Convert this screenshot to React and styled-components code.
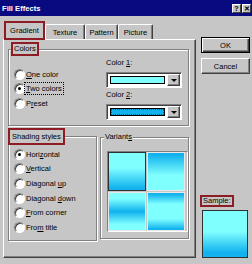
import styled, { createGlobalStyle, css } from "styled-components";

const BG = "#c6c6c6";
const MARK = "#8e1c24";
const C1 = "#80ffff";
const C2 = "#12b2ee";

const GlobalStyle = createGlobalStyle`
  html, body { margin: 0; padding: 0; background: ${BG}; }
  body {
    font-family: "Liberation Sans", Arial, sans-serif;
    font-size: 7.5px;
    color: #000;
  }
`;

const Window = styled.div`
  width: 252px;
  height: 264px;
  display: flex;
  flex-direction: column;
  background: ${BG};
  overflow: hidden;
`;

const TitleBar = styled.div`
  height: 16px;
  flex: none;
  display: flex;
  align-items: center;
  padding: 0 1px 0 2px;
  background: #0a0a80;
  color: #fff;
  font-weight: bold;
  font-size: 7.6px;
`;

const TitleText = styled.span`
  flex: 1;
`;

const CaptionButtons = styled.div`
  display: flex;
  gap: 1px;
`;

const CaptionButton = styled.span`
  box-sizing: border-box;
  width: 9px;
  height: 9px;
  display: flex;
  align-items: center;
  justify-content: center;
  background: ${BG};
  color: #000;
  font-size: 7px;
  line-height: 7px;
  border: 1px solid;
  border-color: #fff #404040 #404040 #fff;
`;

const Main = styled.div`
  flex: 1;
  display: flex;
`;

const TabArea = styled.div`
  width: 193px;
  margin-left: 3px;
  padding-top: 5px;
  display: flex;
  flex-direction: column;
`;

const TabRow = styled.div`
  height: 18px;
  display: flex;
  align-items: flex-end;
  padding-left: 1px;
`;

const Tab = styled.div`
  box-sizing: border-box;
  width: ${(p) => p.$w}px;
  height: 15px;
  display: flex;
  align-items: center;
  justify-content: center;
  border-top: 1px solid #fff;
  border-left: 1px solid #fff;
  border-right: 1px solid #404040;
  border-radius: 2px 2px 0 0;
  box-shadow: inset -1px 0 0 #808080;
  ${(p) =>
    p.$active &&
    css`
      position: relative;
      z-index: 1;
      height: 19px;
      margin-bottom: -1px;
      border: 2px solid ${MARK};
      border-radius: 0;
      box-shadow: none;
      background: ${BG};
    `}
`;

const Panel = styled.div`
  box-sizing: border-box;
  height: 219px;
  padding: 2px 4px 0 4px;
  border-top: 1px solid #fff;
  border-left: 1px solid #fff;
  border-right: 1px solid #404040;
  border-bottom: 1px solid #404040;
  box-shadow: inset -1px -1px 0 #808080;
`;

const Group = styled.fieldset`
  box-sizing: border-box;
  width: ${(p) => p.$w}px;
  margin: ${(p) => p.$mt || 0}px 0 0 0;
  padding: 0;
  min-inline-size: 0;
  border: 1px solid #808080;
  box-shadow: 1px 1px 0 #fff, inset 1px 1px 0 #fff;
`;

const Legend = styled.legend`
  padding: ${(p) => p.$pad || "0 1px"};
  margin-left: ${(p) => p.$ml}px;
  line-height: 10px;
  background: ${BG};
  ${(p) =>
    p.$mark &&
    css`
      border: 2px solid ${MARK};
    `}
`;

const ColorsBody = styled.div`
  display: grid;
  grid-template-columns: 92px 76px;
  padding: 0 0 5px 5px;
`;

const RadioList = styled.div`
  padding-top: ${(p) => p.$pt}px;
  padding-left: ${(p) => p.$pl || 0}px;
  padding-bottom: ${(p) => p.$pb || 0}px;
`;

const RadioRow = styled.div`
  height: 14.6px;
  display: flex;
  align-items: center;
`;

const Radio = styled.span`
  box-sizing: border-box;
  width: 11px;
  height: 11px;
  margin-right: 1px;
  flex: none;
  display: flex;
  align-items: center;
  justify-content: center;
  border-radius: 50%;
  border: 1px solid;
  border-color: #808080 #fff #fff #808080;
  background: #fff;
  box-shadow: inset 1px 1px 0 #404040;
  &::after {
    content: "";
    width: 3px;
    height: 3px;
    border-radius: 50%;
    background: ${(p) => (p.$on ? "#000" : "transparent")};
  }
`;

const RadioText = styled.span`
  white-space: nowrap;
  ${(p) =>
    p.$focus &&
    css`
      outline: 1px dotted #000;
      outline-offset: 1px;
    `}
`;

const ColorColumn = styled.div`
  display: flex;
  flex-direction: column;
`;

const FieldLabel = styled.div`
  line-height: 12px;
  margin-top: 1px;
`;

const Dropdown = styled.div`
  box-sizing: border-box;
  height: 16px;
  margin-top: 3px;
  display: flex;
  padding: 1px;
  border: 1px solid;
  border-color: #808080 #fff #fff #808080;
  background: #fff;
  box-shadow: inset 1px 1px 0 #404040;
`;

const SwatchWell = styled.div`
  flex: 1;
  padding: 2px;
  display: flex;
`;

const Swatch = styled.div`
  flex: 1;
  background: ${(p) => p.$color};
  border: 1px solid #000;
  ${(p) =>
    p.$focus &&
    css`
      outline: 1px dotted #2050a0;
      outline-offset: -2px;
    `}
`;

const ArrowButton = styled.div`
  box-sizing: border-box;
  width: 13px;
  display: flex;
  align-items: center;
  justify-content: center;
  background: ${BG};
  border: 1px solid;
  border-color: #fff #404040 #404040 #fff;
  box-shadow: inset -1px -1px 0 #808080;
  &::after {
    content: "";
    border-left: 3px solid transparent;
    border-right: 3px solid transparent;
    border-top: 3px solid #000;
  }
`;

const GroupRow = styled.div`
  display: flex;
  align-items: flex-start;
  gap: 3px;
  margin-top: 2px;
`;

const TileFrame = styled.div`
  margin: 9px 0 6px 6px;
  width: 79px;
  display: grid;
  grid-template-columns: 38px 38px;
  grid-auto-rows: 39px;
  gap: 1px;
  border: 1px solid;
  border-color: #808080 #fff #fff #808080;
`;

const tileGradients = {
  down: `linear-gradient(to bottom, ${C1} 40%, ${C2} 95%)`,
  up: `linear-gradient(to bottom, ${C2} 5%, ${C1} 60%)`,
  band: `linear-gradient(to bottom, ${C1} 15%, ${C2} 50%, ${C1} 85%)`,
  edges: `linear-gradient(to bottom, ${C2} 3%, ${C1} 30%, ${C1} 70%, ${C2} 97%)`,
};

const Tile = styled.div`
  box-sizing: border-box;
  background: ${(p) => tileGradients[p.$kind]};
  border: 1px solid ${(p) => (p.$selected ? "#303030" : "#e8e8e8")};
`;

const SideColumn = styled.div`
  width: 49px;
  margin-left: 5px;
  padding-top: 21px;
  padding-bottom: 6px;
  display: flex;
  flex-direction: column;
`;

const Button = styled.div`
  box-sizing: border-box;
  height: 16px;
  display: flex;
  align-items: center;
  justify-content: center;
  margin-top: ${(p) => p.$mt || 0}px;
  border: 1px solid;
  border-color: #fff #404040 #404040 #fff;
  box-shadow: inset -1px -1px 0 #808080;
  ${(p) =>
    p.$default &&
    css`
      border-color: #000;
      box-shadow: inset 1px 1px 0 #fff, inset -1px -1px 0 #404040,
        inset -2px -2px 0 #808080;
    `}
`;

const SampleBlock = styled.div`
  margin-top: auto;
  display: flex;
  flex-direction: column;
  align-items: flex-start;
`;

const SampleLabel = styled.div`
  margin-left: -1px;
  padding: 0 1px;
  line-height: 8px;
  border: 2px solid ${MARK};
`;

const SampleBox = styled.div`
  box-sizing: border-box;
  width: 46px;
  height: 48px;
  margin: 3px 0 0 1px;
  border: 1px solid #303030;
  background: linear-gradient(to bottom, ${C1} 45%, ${C2} 90%);
`;

const shadingStyles = [
  { key: "h", label: <>Hori<u>z</u>ontal</>, on: true },
  { key: "v", label: <><u>V</u>ertical</> },
  { key: "du", label: <>Diagonal <u>u</u>p</> },
  { key: "dd", label: <>Diagonal <u>d</u>own</> },
  { key: "fc", label: <><u>F</u>rom corner</> },
  { key: "ft", label: <>Fro<u>m</u> title</> },
];

const colorModes = [
  { key: "one", label: <><u>O</u>ne color</> },
  { key: "two", label: <><u>T</u>wo colors</>, on: true },
  { key: "pre", label: <>P<u>r</u>eset</> },
];

export default function App() {
  return (
    <>
      <GlobalStyle />
      <Window>
        <TitleBar>
          <TitleText>Fill Effects</TitleText>
          <CaptionButtons>
            <CaptionButton>?</CaptionButton>
            <CaptionButton>✕</CaptionButton>
          </CaptionButtons>
        </TitleBar>
        <Main>
          <TabArea>
            <TabRow>
              <Tab $w={41} $active>Gradient</Tab>
              <Tab $w={40}>Texture</Tab>
              <Tab $w={33}>Pattern</Tab>
              <Tab $w={35}>Picture</Tab>
            </TabRow>
            <Panel>
              <Group $w={181}>
                <Legend $mark $ml={2}>Colors</Legend>
                <ColorsBody>
                  <RadioList $pt={11}>
                    {colorModes.map((m) => (
                      <RadioRow key={m.key}>
                        <Radio $on={m.on} />
                        <RadioText $focus={m.on}>{m.label}</RadioText>
                      </RadioRow>
                    ))}
                  </RadioList>
                  <ColorColumn>
                    <FieldLabel>Color <u>1</u>:</FieldLabel>
                    <Dropdown>
                      <SwatchWell>
                        <Swatch $color={C1} />
                      </SwatchWell>
                      <ArrowButton />
                    </Dropdown>
                    <FieldLabel>Color <u>2</u>:</FieldLabel>
                    <Dropdown>
                      <SwatchWell>
                        <Swatch $color={C2} $focus />
                      </SwatchWell>
                      <ArrowButton />
                    </Dropdown>
                  </ColorColumn>
                </ColorsBody>
              </Group>
              <GroupRow>
                <Group $w={89}>
                  <Legend $mark $ml={-1} $pad="1.5px 2px">Shading styles</Legend>
                  <RadioList $pt={2} $pl={5} $pb={5}>
                    {shadingStyles.map((s) => (
                      <RadioRow key={s.key}>
                        <Radio $on={s.on} />
                        <RadioText>{s.label}</RadioText>
                      </RadioRow>
                    ))}
                  </RadioList>
                </Group>
                <Group $w={89} $mt={4}>
                  <Legend $ml={3}>Variant<u>s</u></Legend>
                  <TileFrame>
                    <Tile $kind="down" $selected />
                    <Tile $kind="up" />
                    <Tile $kind="band" />
                    <Tile $kind="edges" />
                  </TileFrame>
                </Group>
              </GroupRow>
            </Panel>
          </TabArea>
          <SideColumn>
            <Button $default>OK</Button>
            <Button $mt={5}>Cancel</Button>
            <SampleBlock>
              <SampleLabel>Sample:</SampleLabel>
              <SampleBox />
            </SampleBlock>
          </SideColumn>
        </Main>
      </Window>
    </>
  );
}
